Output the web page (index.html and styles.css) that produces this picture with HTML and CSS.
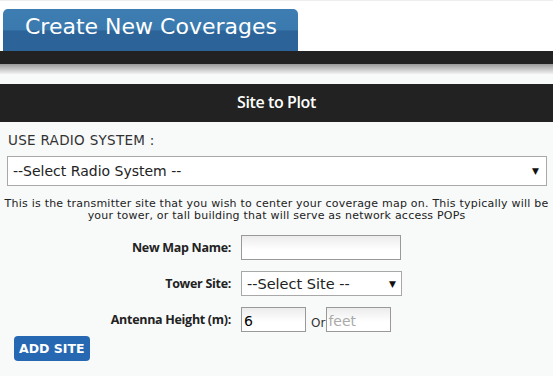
FILE: index.html
```html
<!DOCTYPE html>
<html lang="en">
<head>
    <meta charset="UTF-8" />
    <title>Create New Coverages</title>
    <link rel="stylesheet" href="styles.css">
</head>
<body>
    <div class="top">
        <div class="tab">Create New Coverages</div>
    </div>
    <div class="bar"></div>
    <div class="bar-shadow"></div>

    <div class="panel">
        <div class="panel-title">Site to Plot</div>
        <div class="panel-body">
            <div class="system-label">USE RADIO SYSTEM :</div>
            <div class="select wide">
                <span>--Select Radio System --</span>
                <span class="arrow">&#9660;</span>
            </div>
            <p class="note">This is the transmitter site that you wish to center your coverage map on. This typically will be your tower, or tall building that will serve as network access POPs</p>

            <div class="form">
                <label>New Map Name:</label>
                <div class="field"><input type="text" class="text long" /></div>

                <label>Tower Site:</label>
                <div class="field">
                    <div class="select site">
                        <span>--Select Site --</span>
                        <span class="arrow">&#9660;</span>
                    </div>
                </div>

                <label>Antenna Height (m):</label>
                <div class="field">
                    <input type="text" class="text short" value="6" />
                    <span class="or">Or</span>
                    <input type="text" class="text short feet" placeholder="feet" />
                </div>
            </div>

            <button class="add">ADD SITE</button>
        </div>
    </div>
</body>
</html>
```

FILE: styles.css
```css
body {
    margin: 0;
    font-family: "DejaVu Sans", Verdana, sans-serif;
    background-color: #f8fafa;
    color: #222;
}
.top {
    background-color: #fff;
    border-top: 1px solid #eee;
    padding: 8px 0 0 3px;
    height: 42px;
}
.tab {
    width: 295px;
    height: 42px;
    box-sizing: border-box;
    padding: 5px 0 0 22px;
    border-radius: 5px 5px 0 0;
    background: linear-gradient(#3d7db2 0%, #3a7aae 50%, #2c6499 52%, #2c6499 100%);
    color: #fff;
    font-size: 22px;
}
.bar {
    height: 13px;
    background-color: #222;
}
.bar-shadow {
    height: 10px;
    background: linear-gradient(#9a9a9a, #f2f2f2);
}
.panel {
    margin-top: 10px;
}
.panel-title {
    height: 38px;
    line-height: 37px;
    background-color: #222;
    color: #fff;
    text-align: center;
    font-family: "Open Sans", sans-serif;
    font-weight: 600;
    font-size: 16px;
    letter-spacing: -0.4px;
}
.panel-body {
    padding: 10px 7px 0 7px;
}
.system-label {
    font-size: 13.5px;
    color: #333;
    padding-left: 1px;
    margin-bottom: 8px;
    letter-spacing: 0.3px;
}
.select {
    display: flex;
    align-items: center;
    justify-content: space-between;
    box-sizing: border-box;
    background-color: #fff;
    border: 1px solid #a8a8a8;
    color: #222;
}
.select .arrow {
    font-size: 9px;
    color: #111;
}
.wide {
    width: 540px;
    height: 30px;
    padding: 0 7px 0 5px;
    font-size: 14px;
}
.note {
    margin: 12px -5px 0 -5px;
    font-size: 11px;
    line-height: 12px;
    letter-spacing: 0.22px;
    text-align: center;
    color: #222;
}
.form {
    display: grid;
    grid-template-columns: 224px auto;
    column-gap: 10px;
    row-gap: 11px;
    align-items: center;
    margin-top: 13px;
}
.form label {
    text-align: right;
    font-family: "Open Sans", sans-serif;
    font-weight: 700;
    font-size: 12.5px;
    color: #222;
    letter-spacing: -0.3px;
}
.field {
    display: flex;
    align-items: center;
}
.text {
    box-sizing: border-box;
    height: 25px;
    border: 1px solid #999;
    background: linear-gradient(#ececec, #fff 60%);
    font-family: "DejaVu Sans", Verdana, sans-serif;
    font-size: 14px;
    padding: 2px 2px 0 2px;
    color: #000;
}
.long {
    width: 160px;
}
.short {
    width: 65px;
}
.feet::placeholder {
    color: #aaa;
}
.feet {
    padding-left: 1px;
}
.or {
    font-size: 12px;
    color: #333;
    margin: 6px 1px 0 5px;
}
.site {
    width: 161px;
    height: 25px;
    padding: 0 5px 0 5px;
    font-size: 14.5px;
}
.add {
    margin: 4px 0 0 7px;
    padding: 0 5px;
    height: 25px;
    border: none;
    border-radius: 4px;
    background-color: #2768b2;
    color: #fff;
    font-family: "DejaVu Sans", Verdana, sans-serif;
    font-weight: bold;
    font-size: 12.5px;
}
```
